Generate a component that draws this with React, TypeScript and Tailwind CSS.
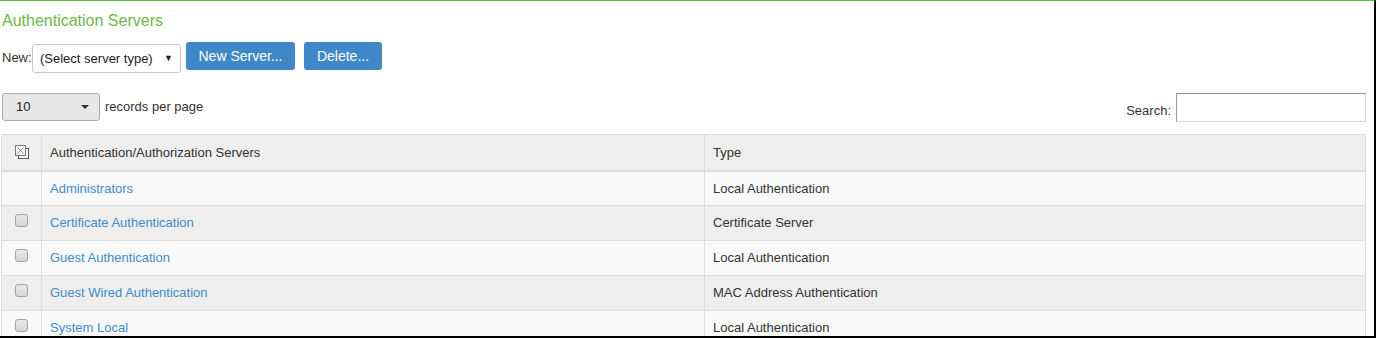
import React from 'react';

const rows = [
  { name: 'Administrators', type: 'Local Authentication', check: false },
  { name: 'Certificate Authentication', type: 'Certificate Server', check: true },
  { name: 'Guest Authentication', type: 'Local Authentication', check: true },
  { name: 'Guest Wired Authentication', type: 'MAC Address Authentication', check: true },
  { name: 'System Local', type: 'Local Authentication', check: true },
];

function SelectAllIcon() {
  return (
    <svg width="14" height="14" viewBox="0 0 14 14" className="block">
      <rect x="3.5" y="3.5" width="10" height="10" fill="#fff" stroke="#555" />
      <rect x="0.5" y="0.5" width="10" height="10" fill="#f4f4f4" stroke="#777" />
      <path d="M2.5 2.5 L8.5 8.5 M8.5 2.5 L2.5 8.5" stroke="#888" strokeWidth="1" />
    </svg>
  );
}

function Check() {
  return <div className="h-[13px] w-[13px] rounded-[3px] border border-[#a3a3a3] bg-gradient-to-b from-[#e9e9e9] to-[#d5d5d5]" />;
}

export default function App() {
  return (
    <div className="h-[338px] w-[1376px] overflow-hidden border-t border-r-2 border-b-2 border-t-[#5cbf3c] border-r-black border-b-black bg-white font-['Liberation_Sans',Arial,sans-serif] text-[13px] text-[#333]">
      <div className="pl-[2px] pr-[8px]">
        <h1 className="pt-[10px] text-[16px] leading-[20px] text-[#6cb84a]">Authentication Servers</h1>

        <div className="mt-[11px] flex items-start">
          <span className="mt-[8px] w-[30px] leading-[15px]">New:</span>
          <div className="mt-[2px] flex h-[29px] w-[149px] items-center justify-between rounded-[3px] border border-[#c8c8c8] bg-white pl-[7px] pr-[7px] text-[13px] text-[#222]">
            <span>(Select server type)</span>
            <span className="text-[9px] text-[#222]">▼</span>
          </div>
          <button className="ml-[5px] h-[28px] w-[109px] rounded-[3px] bg-[#3f88c8] text-[14px] text-white">New Server...</button>
          <button className="ml-[9px] h-[28px] w-[78px] rounded-[3px] bg-[#3f88c8] text-[14px] text-white">Delete...</button>
        </div>

        <div className="mt-[20px] flex items-start justify-between">
          <div className="flex items-start">
            <div className="flex h-[28px] w-[98px] items-center justify-between rounded-[3px] border border-[#adadad] bg-[#e8e8e8] pl-[13px] pr-[10px] text-[13px] text-[#222]">
              <span>10</span>
              <span className="h-0 w-0 border-x-[4px] border-t-[4px] border-x-transparent border-t-[#333]" />
            </div>
            <span className="ml-[5px] mt-[4px]">records per page</span>
          </div>
          <div className="flex items-start">
            <span className="mt-[8px] mr-[5px]">Search:</span>
            <div className="h-[29px] w-[190px] border border-[#d6d6d6] border-t-[#8f8f8f] border-l-[#9a9a9a] bg-white" />
          </div>
        </div>

        <table className="mt-[12px] ml-[-1px] w-[1365px] table-fixed border-collapse">
          <thead>
            <tr className="h-[36px] bg-[#eeeeee]">
              <th className="w-[40px] border border-b-2 border-[#dddddd] font-normal">
                <div className="flex justify-center pl-[1px]"><SelectAllIcon /></div>
              </th>
              <th className="w-[663px] border border-b-2 border-[#dddddd] pl-[8px] text-left font-normal">Authentication/Authorization Servers</th>
              <th className="border border-b-2 border-[#dddddd] pl-[8px] text-left font-normal">Type</th>
            </tr>
          </thead>
          <tbody>
            {rows.map((r, i) => (
              <tr key={r.name} className={`h-[35px] ${i % 2 === 0 ? 'bg-[#f9f9f9]' : 'bg-[#eeeeee]'}`}>
                <td className="border border-[#dddddd] align-middle">
                  {r.check && <div className="mb-[5px] flex justify-center"><Check /></div>}
                </td>
                <td className="border border-[#dddddd] pl-[8px] text-[#428bca]">{r.name}</td>
                <td className="border border-[#dddddd] pl-[8px]">{r.type}</td>
              </tr>
            ))}
          </tbody>
        </table>
      </div>
    </div>
  );
}
